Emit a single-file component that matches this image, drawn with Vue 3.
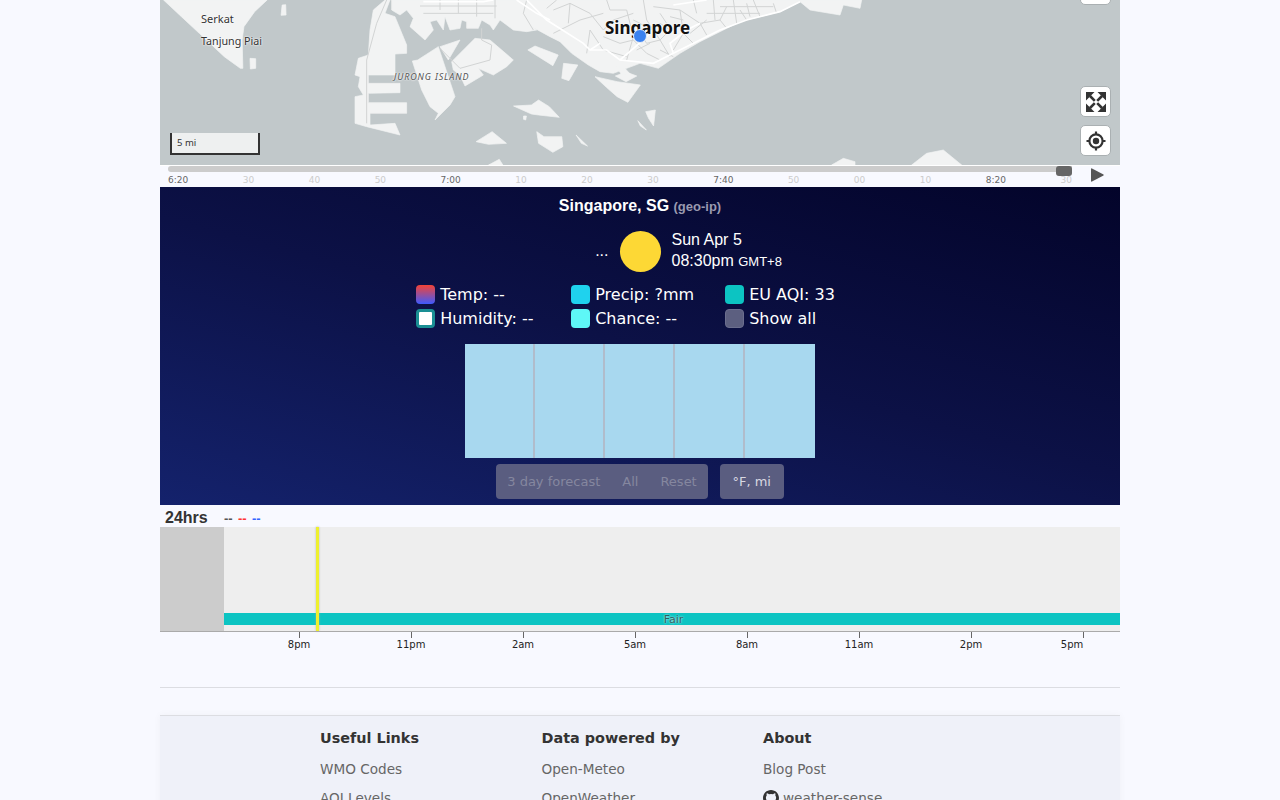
<script setup>
const timeLabels = [
  { t: '6:20', hour: true }, { t: '30' }, { t: '40' }, { t: '50' },
  { t: '7:00', hour: true }, { t: '10' }, { t: '20' }, { t: '30' },
  { t: '7:40', hour: true }, { t: '50' }, { t: '00' }, { t: '10' },
  { t: '8:20', hour: true }, { t: '30' }
]

const toggles = [
  { label: 'Temp: --', kind: 'temp' },
  { label: 'Precip: ?mm', kind: 'precip' },
  { label: 'EU AQI: 33', kind: 'aqi' },
  { label: 'Humidity: --', kind: 'humidity' },
  { label: 'Chance: --', kind: 'chance' },
  { label: 'Show all', kind: 'all' }
]

const hours = ['8pm', '11pm', '2am', '5am', '8am', '11am', '2pm', '5pm']

const footerCols = [
  { title: 'Useful Links', links: ['WMO Codes', 'AQI Levels'] },
  { title: 'Data powered by', links: ['Open-Meteo', 'OpenWeather'] },
  { title: 'About', links: ['Blog Post', 'weather-sense'] }
]
</script>

<template>
  <div class="page">
    <div class="map">
      <svg class="map-svg" viewBox="0 0 2880 495" preserveAspectRatio="none">
        <g class="land">
          <g transform="scale(1.0714 1)">
            <!-- johor tip -->
            <path d="M10 0 60 50 110 100 180 170 225 205 232 205 230 120 235 80 265 35 300 0Z" />
            <path d="M342 15 352 14 353 45 339 46Z" />
            <path d="M252 175 268 176 268 205 253 207Z" />
            <!-- offshore -->
            <path d="M1030 150 1050 138 1115 165 1100 197Z" />
            <path d="M1130 190 1170 195 1145 242 1125 235Z" />
            <path d="M1218 230 1280 245 1345 255 1310 307 1280 290 1250 262Z" />
            <path d="M1275 228 1305 216 1335 228 1305 245Z" />
            <path d="M990 318 1040 315 1060 300 1090 320 1118 352 1060 345 1040 342Z" />
            <path d="M1018 348 1026 348 1024 360 1018 358Z" />
            <path d="M885 425 930 395 970 430 920 433Z" />
            <path d="M1055 395 1075 410 1125 410 1128 440 1100 457 1060 430Z" />
            <path d="M1165 405 1197 438 1180 430Z" />
            <path d="M1338 362 1362 390 1345 378Z" />
            <path d="M1360 335 1387 330 1382 378 1368 355Z" />
            <path d="M920 495 950 478 960 495Z" />
          </g>
          <!-- tuas -->
          <path d="M675 0 640 30 630 90 625 165 595 175 585 225 600 230 595 260 610 285 585 290 585 370 620 380 720 405 705 370 630 375 630 340 740 340 740 308 625 308 625 280 720 278 720 250 625 250 625 225 705 225 705 162 740 160 740 135 705 50 675 40 690 0Z" />
          <!-- jurong island -->
          <path d="M757 183 773 180 835 140 885 290 870 315 825 360 835 340 810 320 785 270Z" />
          <path d="M840 140 900 120 865 180Z" />
          <path d="M875 185 945 115 990 120 1060 180 1040 200 1000 225 955 205 970 225 915 258 900 225 880 210Z" />
          <!-- mainland -->
          <path d="M695 0 695 30 720 45 740 30 760 55 750 80 795 120 820 90 810 65 830 60 850 90 855 50 870 90 900 85 905 60 920 65 920 85 955 85 965 60 990 75 1000 90 1020 60 1060 90 1100 95 1130 90 1115 80 1170 110 1200 125 1235 160 1285 195 1320 215 1360 220 1440 190 1495 205 1560 160 1620 125 1680 95 1740 65 1860 35 1920 5 1950 30 2040 45 2050 15 2100 25 2105 0Z" />
          <path d="M1370 200 1395 205 1410 222 1385 225Z" />
          <path d="M2015 495 2050 475 2085 485 2085 495Z" />
          <path d="M2255 495 2300 460 2350 450 2405 495Z" />
        </g>
        <g class="minor">
          <path d="M620 370V180L650 70 680 0" />
          <path d="M840 0V30M895 0V40M950 0V50M1005 0V55M780 18H1010M790 40H1000M840 145 900 205 990 180 995 135 965 120V85" />
          <path d="M1100 0 1090 40 1120 90M1160 25 1190 0M1180 30 1230 10 1290 40 1330 90 1360 60 1420 40M1180 100 1260 60 1330 40M1230 10 1225 70M1280 160 1290 90 1330 150 1400 170M1400 30 1420 110 1400 180M1340 0 1350 30 1400 30M1450 0 1460 60 1500 120 1530 170M1480 20 1560 30 1620 70 1680 60 1700 20M1560 30 1570 100 1540 150" />
          <path d="M1620 70 1640 105M1680 60 1700 85M1740 30 1760 60M1780 0 1800 50M1840 10 1850 40M1680 20H1840M1600 0 1610 40M1660 0 1665 60M1720 0 1730 70M1640 40H1800M1760 10 1770 50" />
          <path d="M1440 70 1470 90 1500 70 1530 90 1500 120 1460 130 1440 100ZM1380 130 1420 120 1460 160 1500 180M1500 150 1540 170M1590 100 1640 60M1600 130 1560 90M1420 60 1440 70M1500 40 1520 70M1530 50 1570 60M1430 150 1470 130M1330 110 1380 130" />
        </g>
        <g class="roads">
          <path d="M1100 0 1160 60 1270 130 1290 150 1340 150 1380 180 1480 190 1540 160 1620 120 1680 90 1760 60 1860 35 1920 5" />
          <path d="M1380 180 1450 120 1470 100M1290 150 1320 130M1540 160 1530 130 1580 90 1620 70" />
          <path d="M790 5H970L1000 0M1070 0 1130 40 1170 60M1540 15 1640 0" />
        </g>
      </svg>
      <span class="place serkat">Serkat</span>
      <span class="place piai">Tanjung Piai</span>
      <span class="place jurong">JURONG ISLAND</span>
      <span class="place city">Singapore</span>
      <span class="dot"></span>
      <div class="scale">5 mi</div>
      <button class="map-btn top-btn"></button>
      <button class="map-btn full-btn" aria-label="Fullscreen">
        <svg viewBox="0 0 20 20" width="20" height="20">
          <path class="ico" d="M0 0H8.500L0 8.500ZM20 0V8.500L11.500 0ZM20 20H11.500L20 11.500ZM0 20V11.500L8.500 20Z" />
          <path d="M4 4 8.800 8.800M16 4 11.200 8.800M16 16 11.200 11.200M4 16 8.800 11.200" stroke="#333" stroke-width="2.600" />
        </svg>
      </button>
      <button class="map-btn locate-btn" aria-label="Locate">
        <svg viewBox="0 0 20 20" width="20" height="20">
          <circle cx="10" cy="10" r="6.600" fill="none" stroke="#333" stroke-width="2.200" />
          <circle cx="10" cy="10" r="3.200" fill="#333" />
          <path d="M10 .5V3.500M10 16.500V19.500M.5 10H3.500M16.500 10H19.500" stroke="#333" stroke-width="2.200" />
        </svg>
      </button>
    </div>

    <div class="timeline">
      <div class="track">
        <div class="track-bar"></div>
        <div class="handle"></div>
        <div class="track-labels">
          <span v-for="(l, i) in timeLabels" :key="i" :class="{ hour: l.hour }">{{ l.t }}</span>
        </div>
      </div>
      <svg class="play" viewBox="0 0 13 14" width="13" height="14"><path d="M0 1Q0 0 1 .5L12.500 6.500Q13 7 12.500 7.500L1 13.500Q0 14 0 13Z" /></svg>
    </div>

    <section class="panel">
      <h1 class="title">Singapore, SG <small>(geo-ip)</small></h1>
      <div class="now">
        <span class="temp-now">...</span>
        <span class="sun"></span>
        <div class="when">
          <div>Sun Apr 5</div>
          <div>08:30pm <small>GMT+8</small></div>
        </div>
      </div>
      <div class="toggles">
        <label v-for="t in toggles" :key="t.kind" class="toggle">
          <span class="box" :class="t.kind"></span>{{ t.label }}
        </label>
      </div>
      <div class="bars">
        <div v-for="n in 5" :key="n" class="bar"></div>
      </div>
      <div class="actions">
        <div class="btn-group">
          <button class="btn" disabled>3 day forecast</button>
          <button class="btn" disabled>All</button>
          <button class="btn" disabled>Reset</button>
        </div>
        <button class="btn-units">°F, mi</button>
      </div>
    </section>

    <div class="chart-head">
      <strong>24hrs</strong>
      <span class="summary"><i class="c1">--</i> <i class="c2">--</i> <i class="c3">--</i></span>
    </div>
    <div class="chart">
      <div class="past"></div>
      <div class="plot">
        <div class="band"><span>Fair</span></div>
      </div>
      <div class="now-line"></div>
    </div>
    <div class="axis">
      <div v-for="h in hours" :key="h" class="tick">
        <span class="tick-mark"></span>
        <span class="tick-label">{{ h }}</span>
      </div>
    </div>

    <hr class="rule" />

    <footer class="footer">
      <div v-for="col in footerCols" :key="col.title" class="foot-col">
        <h4>{{ col.title }}</h4>
        <a v-for="l in col.links" :key="l" class="foot-link">
          <svg v-if="l === 'weather-sense'" class="gh" viewBox="0 0 16 16" width="16" height="16">
            <path d="M8 0C3.580 0 0 3.580 0 8c0 3.540 2.290 6.530 5.470 7.590.4.070.55-.17.55-.38v-1.340c-2.230.48-2.700-1.080-2.700-1.080-.36-.92-.89-1.170-.89-1.170-.73-.5.050-.49.050-.49.800.060 1.230.830 1.230.830.710 1.220 1.870.870 2.330.660.070-.520.280-.870.510-1.070-1.780-.200-3.640-.890-3.640-3.950 0-.870.310-1.590.820-2.150-.080-.200-.360-1.020.080-2.120 0 0 .670-.210 2.200.820a7.600 7.600 0 0 1 4 0c1.530-1.040 2.200-.820 2.200-.820.440 1.100.160 1.920.080 2.120.510.560.820 1.270.820 2.150 0 3.070-1.870 3.750-3.650 3.950.290.250.540.730.540 1.480v2.200c0 .210.150.460.550.380A8 8 0 0 0 16 8c0-4.420-3.580-8-8-8Z" />
          </svg>{{ l }}
        </a>
      </div>
    </footer>
  </div>
</template>

<style scoped>
.page {
  width: 960px;
  margin: 0 auto;
  font-family: "DejaVu Sans", sans-serif;
  color: #333;
}

/* map */
.map {
  position: relative;
  height: 165px;
  overflow: hidden;
  background: #c1c8ca;
  border-bottom: 1px solid #fff;
  box-sizing: content-box;
}
.map-svg {
  position: absolute;
  left: 0;
  top: 0;
  width: 960px;
  height: 165px;
  filter: blur(.4px);
}
.land path {
  fill: #f2f3f3;
  stroke: #f2f3f3;
  stroke-width: 2;
  stroke-linejoin: round;
}
.minor path {
  fill: none;
  stroke: #d2d4d4;
  stroke-width: 3;
}
.roads path {
  fill: none;
  stroke: #fff;
  stroke-width: 5;
}
.place {
  position: absolute;
  font-family: "Noto Sans", sans-serif;
  color: #333;
  white-space: nowrap;
  text-shadow: 0 0 2px #fff, 0 0 2px #fff;
}
.serkat {
  left: 41px;
  top: 11px;
  font-size: 11px;
}
.piai {
  left: 41px;
  top: 34px;
  font-size: 10.700px;
}
.jurong {
  left: 234px;
  top: 70px;
  font-size: 9px;
  font-style: italic;
  letter-spacing: .85px;
  color: #555;
}
.city {
  left: 445px;
  top: 16px;
  font-size: 17px;
  font-weight: 700;
  color: #111;
}
.dot {
  position: absolute;
  left: 473px;
  top: 29px;
  width: 14px;
  height: 14px;
  box-sizing: border-box;
  border-radius: 50%;
  background: #3b82f0;
  border: 1.500px solid #e8eef8;
}
.scale {
  position: absolute;
  left: 10px;
  top: 133px;
  width: 90px;
  height: 22px;
  box-sizing: border-box;
  padding: 3px 0 0 5px;
  border: 2px solid #333;
  border-top: 0;
  background: #eef0f0;
  font-family: "Noto Sans", sans-serif;
  font-size: 9.500px;
  line-height: 13px;
  color: #333;
}
.map-btn {
  position: absolute;
  right: 9px;
  width: 31px;
  height: 31px;
  padding: 0;
  box-sizing: border-box;
  display: flex;
  align-items: center;
  justify-content: center;
  background: #fff;
  border: 1px solid #aab0b2;
  border-radius: 5px;
}
.top-btn {
  top: -26px;
}
.full-btn {
  top: 86px;
}
.locate-btn {
  top: 125px;
}
.ico {
  fill: #333;
}

/* time slider */
.timeline {
  display: flex;
  height: 21px;
}
.track {
  position: relative;
  width: 904px;
  margin-left: 8px;
}
.track-bar {
  height: 6px;
  background: #ccc;
  border-radius: 3px 0 0 3px;
}
.handle {
  position: absolute;
  right: 0;
  top: 0;
  width: 16px;
  height: 10px;
  border-radius: 3px;
  background: #666;
}
.track-labels {
  display: flex;
  justify-content: space-between;
  margin-top: 3px;
  font-size: 9px;
  line-height: 11px;
  color: #ccc;
}
.track-labels .hour {
  color: #666;
}
.play {
  margin: 2px 0 0 19px;
  fill: #555;
}

/* current conditions */
.panel {
  height: 318px;
  padding-top: 9px;
  box-sizing: border-box;
  background: linear-gradient(195deg, #03042a 0%, #0c1146 50%, #14226c 100%);
  color: #fff;
}
.title {
  margin: 0;
  text-align: center;
  font-family: "Liberation Sans", sans-serif;
  font-size: 16px;
  line-height: 20px;
  font-weight: 700;
}
.title small {
  font-size: 13px;
  color: #9a9ab0;
}
.now {
  display: grid;
  grid-template-columns: 1fr 41px 1fr;
  column-gap: 11px;
  align-items: center;
  height: 41px;
  margin-top: 13px;
  font-family: "Liberation Sans", sans-serif;
  font-size: 16px;
}
.temp-now {
  justify-self: end;
}
.sun {
  width: 41px;
  height: 41px;
  border-radius: 50%;
  background: #fdd835;
}
.when {
  margin-top: -1px;
  line-height: 21px;
}
.when small {
  font-size: 13px;
}
.toggles {
  display: grid;
  grid-template-columns: 155px 154px 139px;
  row-gap: 4.800px;
  width: 448px;
  margin: 14px auto 0;
  font-size: 16px;
  line-height: 19.200px;
}
.toggle {
  display: flex;
  align-items: center;
  gap: 5px;
}
.box {
  width: 19.200px;
  height: 19.200px;
  box-sizing: border-box;
  border-radius: 4px;
}
.box.temp {
  background: linear-gradient(#f44336, #3d5afe);
}
.box.precip {
  background: #1fd2ee;
}
.box.aqi {
  background: #0cc4c2;
}
.box.humidity {
  background: #fff;
  border: 3px solid #1a8f94;
}
.box.chance {
  background: #5ef7f7;
}
.box.all {
  background: #5c5f80;
  border: 1px solid #6b6e8e;
}
.bars {
  display: flex;
  width: 350px;
  height: 114px;
  margin: 16px auto 0;
}
.bar {
  flex: 0 0 70px;
  box-sizing: border-box;
  background: #a8d8ef;
  border-right: 2px solid #b0bccb;
}
.bar:last-child {
  border-right: 0;
}
.actions {
  display: flex;
  justify-content: center;
  gap: 12px;
  margin-top: 6px;
}
.btn-group {
  display: flex;
  height: 35px;
  border-radius: 4px;
  background: #5a5d80;
}
.btn {
  padding: 0 11px;
  border: 0;
  background: none;
  font: 13px "DejaVu Sans", sans-serif;
  color: #85879f;
}
.btn-units {
  width: 64px;
  height: 35px;
  padding: 0;
  border: 0;
  border-radius: 4px;
  background: #5a5d80;
  font: 13px "DejaVu Sans", sans-serif;
  color: #d8d8e2;
}

/* 24h chart */
.chart-head {
  display: flex;
  align-items: flex-end;
  height: 22px;
  padding-left: 5px;
  font-family: "Liberation Sans", sans-serif;
}
.chart-head strong {
  width: 59px;
  font-size: 16px;
  line-height: 19px;
}
.summary {
  font-size: 13px;
  font-weight: 700;
  line-height: 16px;
  word-spacing: 1.700px;
}
.summary i {
  font-style: normal;
}
.c1 {
  color: #555;
}
.c2 {
  color: #f33;
}
.c3 {
  color: #36f;
}
.chart {
  position: relative;
  display: flex;
  height: 104px;
  border-bottom: 1px solid #aaa;
}
.past {
  width: 64px;
  background: #ccc;
}
.plot {
  flex: 1;
  display: flex;
  flex-direction: column;
  justify-content: flex-end;
  padding-bottom: 6px;
  background: #eee;
}
.band {
  height: 12px;
  padding-left: 3px;
  background: #0cc4c2;
  text-align: center;
  font-size: 11px;
  line-height: 13px;
  color: #2e5f60;
  text-shadow: 0 0 2px #fff;
}
.now-line {
  position: absolute;
  left: 156px;
  top: 0;
  bottom: 0;
  width: 3px;
  background: #eef02e;
  box-shadow: 0 0 2px #aaa;
}
.axis {
  display: flex;
  padding-left: 83px;
  height: 26px;
  overflow: hidden;
}
.tick {
  flex: 0 0 112px;
  display: flex;
  flex-direction: column;
  align-items: center;
  font-size: 10px;
  color: #222;
}
.tick-mark {
  width: 1px;
  height: 6px;
  background: #666;
}
.tick-label {
  line-height: 13px;
}
.tick:last-child .tick-label {
  transform: translateX(-11px);
}
.rule {
  height: 1px;
  margin: 29px 0 27px;
  border: 0;
  background: #dcdde2;
}

/* footer */
.footer {
  display: grid;
  grid-template-columns: 221.500px 221.500px 1fr;
  padding: 12px 0 30px 160px;
  background: #eff1f9;
  border-top: 1px solid #dcdde2;
  box-shadow: 0 0 8px rgba(0, 0, 0, .04);
  font-size: 13.600px;
}
.foot-col h4 {
  margin: 0 0 6.500px;
  font-size: 14.400px;
  line-height: 20px;
  font-weight: 700;
  color: #333;
}
.foot-link {
  display: flex;
  align-items: center;
  gap: 4px;
  height: 29px;
  color: #666;
}
.gh {
  fill: #333;
}
</style>

<style>
html {
  overflow: hidden;
}
body {
  background: #f8f9ff;
}
</style>
